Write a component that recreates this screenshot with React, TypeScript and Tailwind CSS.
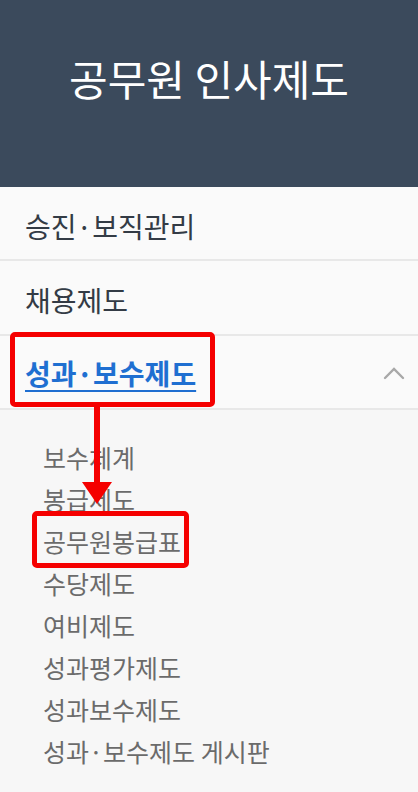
import React from "react";

const font = { fontFamily: '"Noto Sans CJK KR", "Noto Sans", sans-serif' };

const subItems = [
  "보수체계",
  "봉급제도",
  "공무원봉급표",
  "수당제도",
  "여비제도",
  "성과평가제도",
  "성과보수제도",
  "성과·보수제도 게시판",
];

export default function App() {
  return (
    <div className="relative w-[418px] h-[792px] overflow-hidden bg-[#f7f7f7]" style={font}>
      <header className="h-[187px] bg-[#3b4a5c] flex items-center justify-center pb-[32px]">
        <h1 className="text-white text-[42px] font-normal leading-none">공무원 인사제도</h1>
      </header>
      <nav className="bg-[#fafafa]">
        <div className="h-[74px] flex items-center px-[25px] pt-[6px] border-b-2 border-[#e8e8e8]">
          <span className="text-[28px] leading-none text-[#333b45]">승진·보직관리</span>
        </div>
        <div className="h-[75px] flex items-center px-[25px] pt-[5px] border-b-2 border-[#e8e8e8]">
          <span className="text-[28px] leading-none text-[#333b45]">채용제도</span>
        </div>
        <div className="h-[74px] flex items-center justify-between pl-[25px] pr-[13px] pt-[2px] border-b-2 border-[#e8e8e8]">
          <span className="text-[28px] leading-none font-bold text-[#1f6fd1] underline underline-offset-[5px] decoration-2">성과·보수제도</span>
          <svg width="22" height="14" viewBox="0 0 22 14" fill="none">
            <path d="M2 12 L11 3 L20 12" stroke="#a8a8a8" strokeWidth="2.4" strokeLinecap="round" />
          </svg>
        </div>
      </nav>
      <ul className="bg-[#f7f7f7] pt-[26px] pl-[43px]">
        {subItems.map((t) => (
          <li key={t} className="h-[42px] flex items-center text-[25px] leading-none text-[#6b6b6b]">
            {t}
          </li>
        ))}
      </ul>

      {/* annotation overlays */}
      <div className="absolute left-[10px] top-[332px] w-[205px] h-[75px] border-[5px] border-[#f50000] rounded-[5px]" />
      <div className="absolute left-[94px] top-[407px] w-[6px] h-[80px] bg-[#f50000]" />
      <svg className="absolute left-[82px] top-[482px]" width="30" height="22" viewBox="0 0 30 22">
        <polygon points="0,0 30,0 15,22" fill="#f50000" />
      </svg>
      <div className="absolute left-[32px] top-[511px] w-[157px] h-[57px] border-[5px] border-[#f50000] rounded-[5px]" />
    </div>
  );
}
